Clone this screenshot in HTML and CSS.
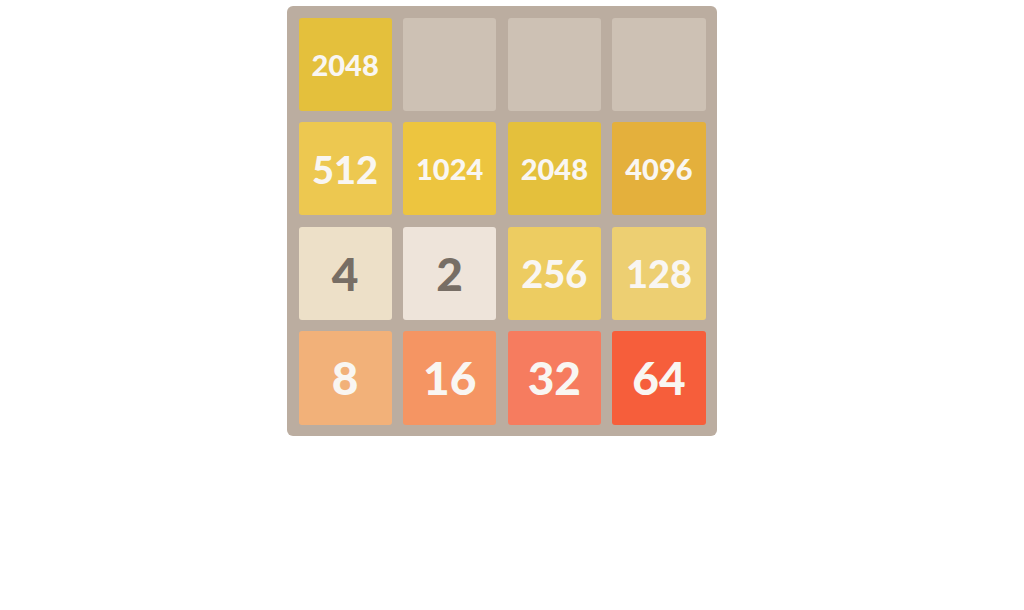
FILE: index.html
```html
<!DOCTYPE html>
<html lang="en">
<head>
  <meta charset="UTF-8" />
  <meta name="viewport" content="width=device-width, initial-scale=1.0"/>
  <title>2048</title>
  <link rel="stylesheet" href="styles.css">
</head>
<body>
  <div class="board">
    <!-- fila 1 -->
    <div class="tile t2048 small">2048</div>
    <div class="tile empty"></div>
    <div class="tile empty"></div>
    <div class="tile empty"></div>

    <!-- fila 2 -->
    <div class="tile t512 mid">512</div>
    <div class="tile t1024 small">1024</div>
    <div class="tile t2048 small">2048</div>
    <div class="tile t4096 small">4096</div>

    <!-- fila 3 -->
    <div class="tile t4 dark">4</div>
    <div class="tile t2 dark">2</div>
    <div class="tile t256 mid">256</div>
    <div class="tile t128 mid">128</div>

    <!-- fila 4 -->
    <div class="tile t8">8</div>
    <div class="tile t16">16</div>
    <div class="tile t32">32</div>
    <div class="tile t64">64</div>
  </div>
</body>
</html>
```

FILE: styles.css
```css
* {
  margin: 0;
  padding: 0;
  box-sizing: border-box;
}

body {
  background: #fff;
  font-family: Lato, "Open Sans", sans-serif;
  padding: 6px 0 0 287px;
}

/* Tablero */
.board {
  width: 430px;
  height: 430px;
  background: #bbada0;
  border-radius: 6px;
  padding: 11.5px;
  display: grid;
  grid-template-columns: repeat(4, 1fr);
  grid-template-rows: repeat(4, 1fr);
  gap: 11.5px;
}

/* Ficha */
.tile {
  border-radius: 3px;
  display: flex;
  justify-content: center;
  align-items: center;
  font-weight: 900;
  font-size: 46px;
  color: #f9f6f2;
}

.tile.mid { font-size: 38px; }
.tile.small { font-size: 29px; }
.tile.dark { color: #776e65; }

.empty { background: #cdc1b4; }
.t2 { background: #eee4da; }
.t4 { background: #ede0c8; }
.t8 { background: #f2b179; }
.t16 { background: #f59563; }
.t32 { background: #f67c5f; }
.t64 { background: #f65e3b; }
.t128 { background: #edcf72; }
.t256 { background: #edcc61; }
.t512 { background: #edc850; }
.t1024 { background: #edc53f; }
.t2048 { background: #e4c03c; }
.t4096 { background: #e4b03c; }
```
